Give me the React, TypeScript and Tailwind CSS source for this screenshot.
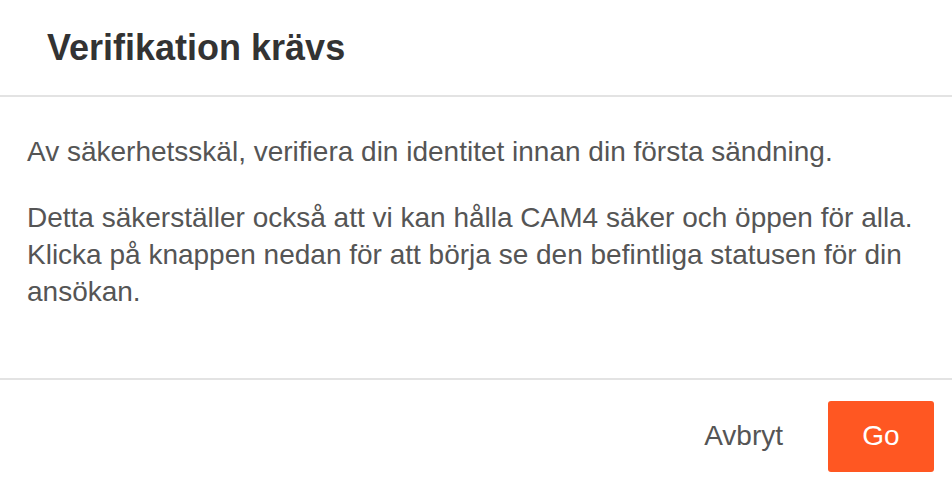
export default function App() {
  return (
    <div className="w-[952px] h-[492px] bg-white flex flex-col font-['Liberation_Sans',Arial,sans-serif]">
      <div className="h-[97px] px-[47px] flex items-center border-b-2 border-[#e3e3e3]">
        <h1 className="text-[36px] font-bold text-[#333333]">Verifikation krävs</h1>
      </div>
      <div className="flex-1 px-[27px] pt-[36px] text-[28px] leading-[37px] text-[#555555]">
        <p>Av säkerhetsskäl, verifiera din identitet innan din första sändning.</p>
        <p className="mt-[29px]">
          Detta säkerställer också att vi kan hålla CAM4 säker och öppen för alla.
          <br />
          Klicka på knappen nedan för att börja se den befintliga statusen för din
          <br />
          ansökan.
        </p>
      </div>
      <div className="h-[114px] border-t-2 border-[#e3e3e3] flex items-center justify-end pr-[18px] gap-[45px]">
        <button className="text-[28px] text-[#555555]">Avbryt</button>
        <button className="w-[106px] h-[71px] rounded-[3px] bg-[#ff5722] text-white text-[28px]">Go</button>
      </div>
    </div>
  );
}
